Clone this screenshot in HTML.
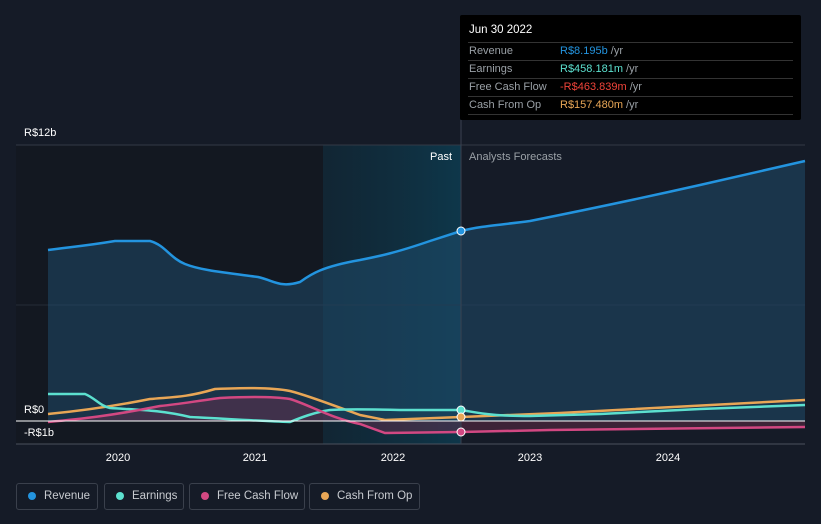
<!DOCTYPE html>
<html><head><meta charset="utf-8"><style>
body{margin:0;width:821px;height:524px;background:#151b27;font-family:"Liberation Sans",sans-serif;overflow:hidden;position:relative}
.tt{position:absolute;left:460px;top:15px;width:341px;height:105px;background:#000;border-radius:2px;font-size:11px;color:#9aa0a6}
.tt .h{color:#fff;padding:9px 9px 6px;font-size:11.5px}
.tt .r{margin:0 8px;border-top:1px solid #333;height:17px;line-height:17px;padding-left:1px;position:relative}
.tt .r span{position:absolute;left:92px}
.lg{position:absolute;top:483px;height:27px;border:1px solid #3a404c;border-radius:3px;font-size:11.5px;color:#c8cbd0;line-height:25px;box-sizing:border-box;padding-left:27px}
.lg i{position:absolute;left:11px;top:8px;width:8px;height:8px;border-radius:50%}
</style></head><body>
<svg width="821" height="524" style="position:absolute;left:0;top:0">
<defs><linearGradient id="hl" x1="0" x2="1"><stop offset="0" stop-color="#0e3040" stop-opacity=".5"/><stop offset="1" stop-color="#0d3a4e" stop-opacity=".9"/></linearGradient></defs>
<rect x="16" y="145" width="307" height="299" fill="#131821"/>
<rect x="323" y="145" width="138" height="299" fill="url(#hl)"/>
<line x1="16" y1="145" x2="805" y2="145" stroke="#333a46"/>
<line x1="16" y1="305" x2="805" y2="305" stroke="#262c38"/>
<line x1="16" y1="444" x2="805" y2="444" stroke="#4a505c"/>
<path d="M48,250 C70,247 85,246 115,241 L150,241 C165,245 170,258 185,264 C200,270 220,272 258,277 C275,281 280,288 300,282 C310,275 320,267 360,260 C380,256 395,253 430,241 L461,231 C480,226 500,225 530,221 C570,213 620,203 700,185 L805,161 L805,421 L48,421Z" fill="#1f4a6a" fill-opacity=".55"/>
<path d="M48,250 C70,247 85,246 115,241 L150,241 C165,245 170,258 185,264 C200,270 220,272 258,277 C275,281 280,288 300,282 C310,275 320,267 360,260 C380,256 395,253 430,241 L461,231 C480,226 500,225 530,221 C570,213 620,203 700,185 L805,161" fill="none" stroke="#2394df" stroke-width="2.5"/>
<path d="M48,422 C80,419 110,416 160,406 C180,404 190,402 220,398 C240,397 270,396 290,399 C310,405 330,418 360,424 L385,433 L461,432 L550,430 L805,427 L805,421 L48,421Z" fill="#7a3050" fill-opacity=".4"/>
<path d="M48,414 C80,411 110,407 150,399 C170,397 185,398 215,389 C240,388 270,387 290,391 C310,396 340,408 360,415 L385,420 L461,417 L560,413 L805,400" fill="none" stroke="#e8a656" stroke-width="2.5"/>
<path d="M48,394 L85,394 C95,398 100,406 110,408 C140,410 160,410 190,417 C230,419 260,421 290,422 C300,418 315,412 330,410 C345,409 360,409 400,410 L461,410 C480,413 490,416 530,416 L600,414 L700,409 L805,405" fill="none" stroke="#5ce0cf" stroke-width="2.5"/>
<path d="M48,422 C80,419 110,416 160,406 C180,404 190,402 220,398 C240,397 270,396 290,399 C310,405 330,418 360,424 L385,433 L461,432 L550,430 L805,427" fill="none" stroke="#d24882" stroke-width="2.5"/>
<line x1="16" y1="421" x2="805" y2="421" stroke="#fff" stroke-width="1"/>
<line x1="461" y1="120" x2="461" y2="444" stroke="#3a4250"/>
<circle cx="461" cy="231" r="4" fill="#2394df" stroke="#fff" stroke-width="1"/>
<circle cx="461" cy="410" r="4" fill="#5ce0cf" stroke="#fff" stroke-width="1"/>
<circle cx="461" cy="417" r="4" fill="#e8a656" stroke="#fff" stroke-width="1"/>
<circle cx="461" cy="432" r="4" fill="#d24882" stroke="#fff" stroke-width="1"/>
<g font-size="11" fill="#fff">
<text x="24" y="136">R$12b</text><text x="24" y="413">R$0</text><text x="24" y="436">-R$1b</text>
<text x="430" y="160">Past</text><text x="469" y="160" fill="#9aa0a6">Analysts Forecasts</text>
<text x="118" y="461" text-anchor="middle">2020</text><text x="255" y="461" text-anchor="middle">2021</text><text x="393" y="461" text-anchor="middle">2022</text><text x="530" y="461" text-anchor="middle">2023</text><text x="668" y="461" text-anchor="middle">2024</text>
</g>
</svg>
<div class="tt"><div class="h">Jun 30 2022</div>
<div class="r">Revenue<span><b style="font-weight:normal;color:#2394df">R$8.195b</b> /yr</span></div>
<div class="r">Earnings<span><b style="font-weight:normal;color:#5ce0cf">R$458.181m</b> /yr</span></div>
<div class="r">Free Cash Flow<span><b style="font-weight:normal;color:#f0443a">-R$463.839m</b> /yr</span></div>
<div class="r">Cash From Op<span><b style="font-weight:normal;color:#e8a656">R$157.480m</b> /yr</span></div>
<div class="r" style="height:0"></div></div>
<div class="lg" style="left:16px;width:82px"><i style="background:#2394df"></i>Revenue</div>
<div class="lg" style="left:104px;width:80px"><i style="background:#5ce0cf"></i>Earnings</div>
<div class="lg" style="left:189px;width:116px"><i style="background:#d24882"></i>Free Cash Flow</div>
<div class="lg" style="left:309px;width:111px"><i style="background:#e8a656"></i>Cash From Op</div>
</body></html>
